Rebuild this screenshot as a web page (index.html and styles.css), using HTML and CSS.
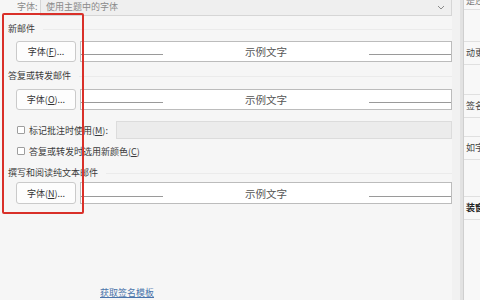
FILE: index.html
```html
<!DOCTYPE html>
<html lang="zh-CN">
<head>
    <meta charset="UTF-8">
    <meta name="viewport" content="width=device-width, initial-scale=1.0">
    <title>签名和信纸</title>
    <link rel="stylesheet" href="styles.css">
</head>
<body>
    <div class="dialog">
        <div class="pane">
            <div class="font-row">
                <span class="font-label">字体:</span>
                <div class="select">
                    <span>使用主题中的字体</span>
                    <svg class="chevron" width="8" height="5" viewBox="0 0 8 5"><path d="M1 1 L4 4 L7 1" fill="none" stroke="#8a8a8a" stroke-width="1"/></svg>
                </div>
            </div>

            <div class="group-title"><span>新邮件</span></div>
            <div class="font-line">
                <button class="font-btn">字体(<u>F</u>)...</button>
                <div class="sample"><i class="rule"></i><span>示例文字</span><i class="rule"></i></div>
            </div>

            <div class="group-title second"><span>答复或转发邮件</span></div>
            <div class="font-line">
                <button class="font-btn">字体(<u>O</u>)...</button>
                <div class="sample"><i class="rule"></i><span>示例文字</span><i class="rule"></i></div>
            </div>

            <div class="check-row first">
                <span class="box"></span>
                <label>标记批注时使用(<u>M</u>):</label>
                <div class="field"></div>
            </div>
            <div class="check-row">
                <span class="box"></span>
                <label>答复或转发时选用新颜色(<u>C</u>)</label>
            </div>

            <div class="group-title third"><span>撰写和阅读纯文本邮件</span></div>
            <div class="font-line">
                <button class="font-btn">字体(<u>N</u>)...</button>
                <div class="sample"><i class="rule"></i><span>示例文字</span><i class="rule"></i></div>
            </div>

            <a class="template-link" href="#">获取签名模板</a>
        </div>

        <div class="splitter"></div>

        <div class="side">
            <div class="side-item top">是还</div>
            <div class="side-item first">动更正</div>
            <div class="side-item boxed">签名</div>
            <div class="side-item">如字体</div>
            <div class="side-item dark">装窗</div>
        </div>

        <div class="callout"></div>
    </div>
</body>
</html>
```

FILE: styles.css
```css
/* General Styles */
body {
    margin: 0;
    background-color: #f6f6f6;
    color: #3b3b3b;
    font-family: "Noto Sans CJK SC", "Liberation Sans", sans-serif;
    font-size: 9px;
}

.dialog {
    position: relative;
    display: flex;
    width: 480px;
    height: 300px;
    overflow: hidden;
}

.pane {
    display: flex;
    flex-direction: column;
    width: 452px;
    flex-shrink: 0;
}

/* Font selector */
.font-row {
    display: flex;
    height: 16px;
    padding-left: 17px;
}

.font-label {
    line-height: 13px;
    color: #8a8a8a;
    width: 23px;
}

.select {
    flex: 1;
    display: flex;
    align-items: center;
    justify-content: space-between;
    box-sizing: border-box;
    height: 16px;
    padding: 0 6px 2px 5px;
    background-color: #efefef;
    border: 1px solid #d6d6d6;
    border-top: none;
    color: #8a8a8a;
}

.chevron {
    margin-top: 1px;
}

/* Groups */
.group-title {
    display: flex;
    align-items: center;
    margin-top: 7px;
    padding-left: 8px;
    line-height: 12px;
}

.group-title::after {
    content: "";
    flex: 1;
    height: 1px;
    margin-left: 8px;
    background-color: #ebebeb;
}

.group-title.second {
    margin-top: 8px;
}

.group-title.third {
    margin-top: 10px;
}

.font-line {
    display: flex;
    margin-top: 6px;
    height: 21px;
}

.group-title.second + .font-line {
    margin-top: 7px;
}

.group-title.third + .font-line {
    margin-top: 3px;
    height: 22px;
}

.font-btn {
    width: 60px;
    margin-left: 16px;
    padding: 0;
    border: 1px solid #cacaca;
    border-radius: 3px;
    background-color: #fdfdfd;
    color: #333;
    font-family: inherit;
    font-size: 9px;
}

.font-btn u,
label u {
    text-decoration: underline;
}

.sample {
    flex: 1;
    display: flex;
    align-items: center;
    margin-left: 4px;
    background-color: #fff;
    border: 1px solid #bcbcbc;
    color: #555;
    font-size: 10.5px;
}

.sample span {
    margin: 0 82px;
}

.rule {
    flex: 1;
    height: 1px;
    margin-top: 6px;
    background-color: #9a9a9a;
}

/* Checkboxes */
.check-row {
    display: flex;
    align-items: center;
    margin-top: 6px;
    padding-left: 17px;
    height: 12px;
}

.check-row.first {
    margin-top: 11px;
    height: 18px;
}

.box {
    width: 8px;
    height: 8px;
    margin-right: 4px;
    border: 1px solid #9e9e9e;
    border-radius: 1px;
    background-color: #fff;
    box-sizing: border-box;
}

.field {
    flex: 1;
    align-self: stretch;
    margin-left: 8px;
    background-color: #ececec;
    border: 1px solid #dcdcdc;
}

.template-link {
    margin-top: auto;
    margin-bottom: 1px;
    margin-left: 100px;
    line-height: 12px;
    color: #4a74ab;
}

/* Right side */
.splitter {
    width: 8px;
    flex-shrink: 0;
    background-color: #f1f1f1;
    border-right: 3px solid #e2e2e2;
}

.side {
    flex: 1;
    display: flex;
    flex-direction: column;
    background-color: #f8f8f8;
    border-left: 1px solid #cfcfcf;
    overflow: hidden;
}

.side-item {
    flex-shrink: 0;
    height: 22px;
    margin-top: 18px;
    padding-left: 2px;
    line-height: 22px;
    white-space: nowrap;
    border-top: 1px solid #e0e0e0;
    border-bottom: 1px solid #e0e0e0;
    color: #444;
}

.side-item.top {
    margin-top: -8px;
    height: 16px;
    line-height: 16px;
    color: #777;
}

.side-item.first {
    margin-top: 31px;
}

.side-item.boxed {
    margin-top: 29px;
}

.side-item.dark {
    margin-top: 36px;
    color: #222;
    font-weight: bold;
}

/* Highlight overlay */
.callout {
    position: absolute;
    left: 2px;
    top: 13px;
    width: 78px;
    height: 197px;
    border: 2px solid #d93029;
    border-radius: 2px;
}
```
